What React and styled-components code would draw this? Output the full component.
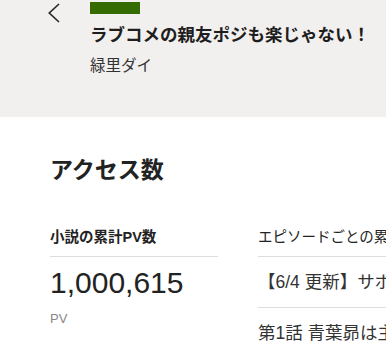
import React from 'react';
import styled, { createGlobalStyle } from 'styled-components';

const GlobalStyle = createGlobalStyle`
	html, body {
		margin: 0;
		padding: 0;
		background: #ffffff;
		overflow: hidden;
	}
	body {
		font-family: 'Liberation Sans', 'Noto Sans CJK JP', sans-serif;
		color: #222222;
	}
`;

const Header = styled.header`
	display: flex;
	background: #f2f0ef;
	padding: 2px 0 40px 48px;
	height: 117px;
	box-sizing: border-box;
`;

const BackButton = styled.button`
	width: 12px;
	height: 20px;
	margin-top: 1px;
	padding: 0;
	border: none;
	background: none;
	cursor: pointer;
	flex-shrink: 0;
`;

const HeaderBody = styled.div`
	margin-left: 30px;
	display: flex;
	flex-direction: column;
	white-space: nowrap;
`;

const Badge = styled.div`
	width: 50px;
	height: 12px;
	background: #346c00;
`;

const Title = styled.h1`
	margin: 8px 0 0;
	font-size: 17.5px;
	line-height: 26px;
	font-weight: 700;
	color: #1e1e1e;
`;

const Author = styled.div`
	margin-top: 7px;
	font-size: 15.5px;
	line-height: 22px;
	color: #333333;
`;

const Main = styled.main`
	padding: 37px 0 0 50px;
`;

const Heading = styled.h2`
	margin: 0;
	font-size: 23px;
	line-height: 33px;
	font-weight: 700;
	color: #222222;
`;

const Columns = styled.div`
	display: flex;
	gap: 40px;
	margin-top: 40px;
	width: 640px;
`;

const Column = styled.section`
	width: ${(p) => p.$width};
	flex-shrink: 0;
`;

const Label = styled.div`
	font-size: 14.5px;
	line-height: 20px;
	font-weight: ${(p) => (p.$bold ? 700 : 400)};
	color: #222222;
	padding-bottom: 9px;
	border-bottom: 1px solid #dddddd;
	white-space: nowrap;
`;

const Count = styled.div`
	margin-top: 8px;
	font-size: 30px;
	line-height: 36px;
	color: #222222;
`;

const Unit = styled.div`
	margin-top: 9px;
	font-size: 13px;
	line-height: 18px;
	color: #888888;
`;

const EpisodeRow = styled.div`
	padding: 13px 0;
	font-size: 17.5px;
	line-height: 24px;
	color: #333333;
	border-bottom: 1px solid #dddddd;
	white-space: nowrap;
`;

const episodes = [
	'【6/4 更新】サポーター限定エピソード',
	'第1話 青葉昴は主人公ではない',
];

const App = () => {
	return (
		<>
			<GlobalStyle />
			<Header>
				<BackButton aria-label='戻る'>
					<svg width='12' height='20' viewBox='0 0 12 20'>
						<polyline
							points='11,1 1.3,10 11,19'
							fill='none'
							stroke='#2a2a2a'
							strokeWidth='1.7'
						/>
					</svg>
				</BackButton>
				<HeaderBody>
					<Badge />
					<Title>ラブコメの親友ポジも楽じゃない！</Title>
					<Author>緑里ダイ</Author>
				</HeaderBody>
			</Header>
			<Main>
				<Heading>アクセス数</Heading>
				<Columns>
					<Column $width='168px'>
						<Label $bold>小説の累計PV数</Label>
						<Count>1,000,615</Count>
						<Unit>PV</Unit>
					</Column>
					<Column $width='400px'>
						<Label>エピソードごとの累計PV数</Label>
						{episodes.map((e) => (
							<EpisodeRow key={e}>{e}</EpisodeRow>
						))}
					</Column>
				</Columns>
			</Main>
		</>
	);
};

export default App;
